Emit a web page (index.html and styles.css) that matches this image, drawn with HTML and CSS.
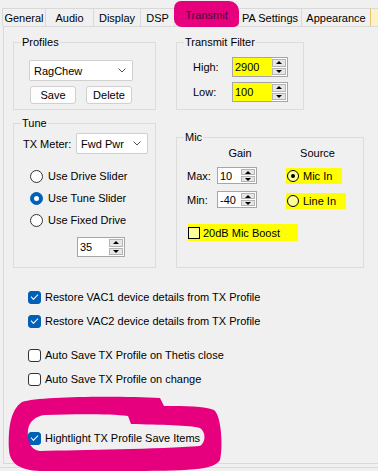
FILE: index.html
```html
<!DOCTYPE html>
<html lang="en">
<head>
    <meta charset="UTF-8">
    <title>Setup - Transmit</title>
    <link rel="stylesheet" href="styles.css">
</head>
<body>
    <div class="window">
        <div class="tabs">
            <div class="tab tab-general">General</div>
            <div class="tab tab-audio">Audio</div>
            <div class="tab tab-display">Display</div>
            <div class="tab tab-dsp">DSP</div>
            <div class="tab tab-transmit active">Transmit</div>
            <div class="tab tab-pa">PA Settings</div>
            <div class="tab tab-appearance">Appearance</div>
            <div class="tab tab-cut"></div>
        </div>

        <div class="page">
            <div class="row row-top">
                <fieldset class="group group-profiles">
                    <legend>Profiles</legend>
                    <div class="combo combo-profile">
                        <span>RagChew</span>
                        <svg class="chevron" width="8" height="5" viewBox="0 0 8 5"><polyline points="0.5,0.5 4,4 7.5,0.5" fill="none" stroke="#555" stroke-width="1"/></svg>
                    </div>
                    <div class="buttons">
                        <div class="btn">Save</div>
                        <div class="btn">Delete</div>
                    </div>
                </fieldset>

                <fieldset class="group group-filter">
                    <legend>Transmit Filter</legend>
                    <div class="filter-row">
                        <span class="filter-label">High:</span>
                        <div class="spin spin-filter">
                            <span class="spin-field marked">2900</span>
                            <span class="spin-btns"><span class="spin-up"></span><span class="spin-down"></span></span>
                        </div>
                    </div>
                    <div class="filter-row">
                        <span class="filter-label">Low:</span>
                        <div class="spin spin-filter">
                            <span class="spin-field marked">100</span>
                            <span class="spin-btns"><span class="spin-up"></span><span class="spin-down"></span></span>
                        </div>
                    </div>
                </fieldset>
            </div>

            <div class="row row-mid">
                <fieldset class="group group-tune">
                    <legend>Tune</legend>
                    <div class="meter-row">
                        <span class="meter-label">TX Meter:</span>
                        <div class="combo combo-meter">
                            <span>Fwd Pwr</span>
                            <svg class="chevron" width="8" height="5" viewBox="0 0 8 5"><polyline points="0.5,0.5 4,4 7.5,0.5" fill="none" stroke="#555" stroke-width="1"/></svg>
                        </div>
                    </div>
                    <div class="radios">
                        <div class="radio-row"><span class="radio"></span>Use Drive Slider</div>
                        <div class="radio-row"><span class="radio checked"></span>Use Tune Slider</div>
                        <div class="radio-row"><span class="radio"></span>Use Fixed Drive</div>
                    </div>
                    <div class="spin spin-drive">
                        <span class="spin-field">35</span>
                        <span class="spin-btns"><span class="spin-up"></span><span class="spin-down"></span></span>
                    </div>
                </fieldset>

                <fieldset class="group group-mic">
                    <legend>Mic</legend>
                    <div class="mic-grid">
                        <span class="mic-head head-gain">Gain</span>
                        <span class="mic-head head-source">Source</span>

                        <span class="mic-label">Max:</span>
                        <div class="spin spin-gain">
                            <span class="spin-field">10</span>
                            <span class="spin-btns"><span class="spin-up"></span><span class="spin-down"></span></span>
                        </div>
                        <div class="source marked source-mic"><span class="old-radio on"></span>Mic In</div>

                        <span class="mic-label">Min:</span>
                        <div class="spin spin-gain">
                            <span class="spin-field">-40</span>
                            <span class="spin-btns"><span class="spin-up"></span><span class="spin-down"></span></span>
                        </div>
                        <div class="source marked source-line"><span class="old-radio"></span>Line In</div>
                    </div>
                    <div class="boost marked"><span class="old-check"></span>20dB Mic Boost</div>
                </fieldset>
            </div>

            <div class="checks">
                <div class="check-row"><span class="check checked"></span>Restore VAC1 device details from TX Profile</div>
                <div class="check-row"><span class="check checked"></span>Restore VAC2 device details from TX Profile</div>
                <div class="check-row gap-before"><span class="check"></span>Auto Save TX Profile on Thetis close</div>
                <div class="check-row"><span class="check"></span>Auto Save TX Profile on change</div>
                <div class="check-row highlight-row"><span class="check checked"></span>Hightlight TX Profile Save Items</div>
            </div>
        </div>
        <div class="status-line"></div>

        <!-- hand-drawn marker ring around the last option -->
        <svg class="marker-ring" width="378" height="471" viewBox="0 0 378 471">
            <path fill="#e6007e" fill-rule="evenodd" d="M22 402 C40 396 120 396 160 398 L164 406 C185 406 205 406 214 410 C222 416 223 450 220 460 C214 470 190 471 120 471 L40 471 C20 470 10 464 9 450 C8 430 10 410 22 402 Z M45 415 C80 414 110 414 128 416 L131 424 C160 425 190 425 200 428 C206 432 206 442 200 446 C160 449 80 450 40 451 C30 450 27 440 28 430 C29 422 35 416 45 415 Z"/>
        </svg>
    </div>
</body>
</html>
```

FILE: styles.css
```css
body {
    margin: 0;
    background-color: #f0f0f0;
    font-family: 'Liberation Sans', Arial, sans-serif;
    font-size: 11px;
    color: #000;
}

.window {
    position: relative;
    width: 378px;
    height: 471px;
    overflow: hidden;
}

/* tab strip */
.tabs {
    display: flex;
    align-items: flex-start;
    height: 18px;
    margin: 8px 0 0 3px;
}

.tab {
    box-sizing: border-box;
    height: 18px;
    margin-left: -1px;
    border: 1px solid #d9d9d9;
    border-bottom: none;
    background-color: #f0f0f0;
    display: flex;
    align-items: center;
    justify-content: center;
    flex-shrink: 0;
}

.tab-general { width: 44px; }
.tab-audio { width: 49px; }
.tab-display { width: 48px; }
.tab-dsp { width: 35px; }
.tab-pa { width: 64px; }
.tab-appearance { width: 70px; }

.tab-cut {
    width: 31px;
    background-color: #fdf1c8;
    border-left-color: #e9c46a;
}

.tab.active {
    position: relative;
    z-index: 2;
    width: 65px;
    height: 26px;
    margin-top: -7px;
    border: none;
    background-color: #e6007e;
    border-radius: 7px 10px 5px 8px;
    color: #4a0a36;
    padding-top: 1px;
}

/* tab page */
.page {
    box-sizing: border-box;
    width: 420px;
    height: 438px;
    margin-left: 3px;
    padding-left: 9px;
    border: 1px solid #d9d9d9;
}

.row {
    display: flex;
    gap: 20px;
}

.row-top {
    padding-top: 8px;
}

.row-mid {
    align-items: flex-end;
    margin-top: 6px;
}

.group {
    box-sizing: border-box;
    margin: 0;
    min-width: 0;
    padding: 0 7px;
    border: 1px solid #dcdcdc;
}

.group legend {
    padding: 0 1px;
    line-height: 14px;
}

.group-profiles { width: 143px; height: 75px; }
.group-filter { width: 128px; height: 75px; }
.group-tune { width: 143px; height: 152px; }
.group-mic { width: 188px; height: 138px; }

/* combos and buttons */
.combo {
    box-sizing: border-box;
    height: 21px;
    display: flex;
    align-items: center;
    justify-content: space-between;
    padding: 0 6px 0 4px;
    background-color: #fff;
    border: 1px solid #cfcfcf;
    border-radius: 2px;
}

.combo-profile {
    width: 104px;
    margin: 11px 0 0 8px;
}

.combo-meter {
    width: 73px;
}

.buttons {
    display: flex;
    gap: 10px;
    margin: 5px 0 0 9px;
}

.btn {
    box-sizing: border-box;
    width: 46px;
    height: 18px;
    display: flex;
    align-items: center;
    justify-content: center;
    background-color: #fdfdfd;
    border: 1px solid #d0d0d0;
    border-radius: 3px;
}

/* numeric up/down */
.spin {
    box-sizing: border-box;
    display: flex;
    background-color: #fff;
    border: 1px solid #a6a6a6;
}

.spin-field {
    flex: 1;
    display: flex;
    align-items: center;
    padding-left: 2px;
}

.spin-btns {
    width: 14px;
    display: flex;
    flex-direction: column;
    gap: 1px;
    padding: 1px 1px 1px 0;
}

.spin-up,
.spin-down {
    flex: 1;
    display: flex;
    align-items: center;
    justify-content: center;
    background-color: #e6e6e6;
    border: 1px solid #b4b4b4;
}

.spin-up::before {
    content: '';
    border-left: 3px solid transparent;
    border-right: 3px solid transparent;
    border-bottom: 3px solid #000;
}

.spin-down::before {
    content: '';
    border-left: 3px solid transparent;
    border-right: 3px solid transparent;
    border-top: 3px solid #000;
}

.marked {
    background-color: #ffff00;
}

/* transmit filter */
.filter-row {
    display: flex;
    align-items: center;
    margin-left: 9px;
}

.filter-row:first-of-type {
    margin-top: 8px;
}

.filter-row + .filter-row {
    margin-top: 5px;
}

.filter-label {
    width: 39px;
}

.spin-filter {
    width: 56px;
    height: 20px;
}

/* tune */
.meter-row {
    display: flex;
    align-items: center;
    margin: 3px 0 0 2px;
}

.meter-label {
    width: 54px;
}

.radios {
    margin: 11px 0 0 9px;
}

.radio-row {
    height: 22px;
    display: flex;
    align-items: center;
    gap: 5px;
}

.radio {
    box-sizing: border-box;
    width: 13px;
    height: 13px;
    border: 1px solid #333;
    border-radius: 50%;
    background-color: #fff;
    display: flex;
    align-items: center;
    justify-content: center;
}

.radio.checked {
    border-color: #0060b8;
    background-color: #0060b8;
}

.radio.checked::after {
    content: '';
    width: 5px;
    height: 5px;
    border-radius: 50%;
    background-color: #fff;
}

.spin-drive {
    width: 48px;
    height: 20px;
    margin: 6px 0 0 56px;
}

/* mic */
.mic-grid {
    display: grid;
    grid-template-columns: 30px 40px 29px 60px;
    grid-template-rows: 14px 17px 17px;
    row-gap: 7px;
    align-items: center;
    padding: 2px 0 0 3px;
}

.mic-head {
    text-align: center;
}

.head-gain { grid-column: 2; margin-left: 6px; }
.head-source { grid-column: 4; margin-left: 3px; }

.spin-gain {
    height: 17px;
}

.source {
    grid-column: 4;
    height: 16px;
    display: flex;
    align-items: center;
    gap: 4px;
    padding-left: 1px;
}

.source-mic { width: 55px; }
.source-line { width: 59px; margin-top: 2px; }

.old-radio {
    box-sizing: border-box;
    width: 12px;
    height: 12px;
    border: 1px solid #000;
    border-radius: 50%;
    background-color: #ffff9a;
    display: flex;
    align-items: center;
    justify-content: center;
}

.old-radio.on::after {
    content: '';
    width: 4px;
    height: 4px;
    border-radius: 50%;
    background-color: #000;
}

.boost {
    width: 110px;
    height: 17px;
    display: flex;
    align-items: center;
    gap: 3px;
    margin: 16px 0 0 4px;
}

.old-check {
    box-sizing: border-box;
    width: 12px;
    height: 12px;
    border: 1px solid #000;
    background-color: #ffff9a;
}

/* option checkboxes */
.checks {
    margin-top: 19px;
    padding-left: 15px;
}

.check-row {
    height: 20px;
    display: flex;
    align-items: center;
    gap: 4px;
}

.check-row + .check-row {
    margin-top: 4px;
}

.check-row.gap-before {
    margin-top: 14px;
}

.check-row.highlight-row {
    margin-top: 39px;
}

.check {
    box-sizing: border-box;
    width: 13px;
    height: 13px;
    border: 1px solid #333;
    border-radius: 3px;
    background-color: #fff;
    display: flex;
    align-items: center;
    justify-content: center;
}

.check.checked {
    border-color: #0060b8;
    background-color: #0060b8;
}

.check.checked::after {
    content: '';
    width: 6px;
    height: 3px;
    margin-top: -2px;
    border-left: 1px solid #fff;
    border-bottom: 1px solid #fff;
    transform: rotate(-45deg);
}

.status-line {
    margin-top: 3px;
    border-top: 1px solid #dadada;
}

.marker-ring {
    position: absolute;
    left: 0;
    top: 0;
    pointer-events: none;
}
```
